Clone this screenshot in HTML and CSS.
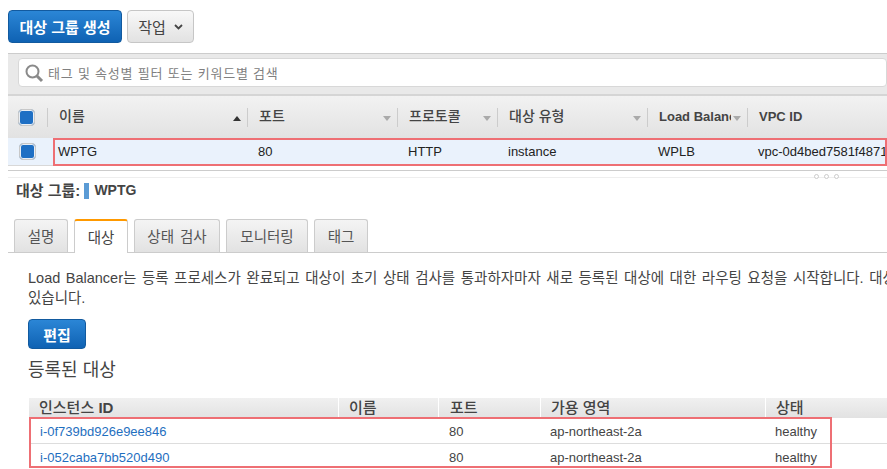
FILE: index.html
```html
<!DOCTYPE html>
<html lang="ko">
<head>
<meta charset="utf-8">
<title>대상 그룹</title>
<link rel="stylesheet" href="styles.css">
</head>
<body>
<div class="toolbar">
  <button class="btn primary create">대상 그룹 생성</button>
  <button class="btn action">작업 <svg class="chev" width="9" height="6" viewBox="0 0 9 6"><path d="M1 1l3.5 3.5L8 1" fill="none" stroke="#444" stroke-width="1.8"/></svg></button>
</div>
<section class="panel">
  <div class="searchbar">
    <div class="search">
      <svg width="20" height="20" viewBox="0 0 20 20"><circle cx="8.5" cy="8.5" r="6" fill="none" stroke="#8a8a8a" stroke-width="2"/><path d="M13 13l5 5" stroke="#8a8a8a" stroke-width="3"/></svg>
      <span>태그 및 속성별 필터 또는 키워드별 검색</span>
    </div>
  </div>
  <div class="grid head">
    <div class="c-check"><span class="check"></span></div>
    <div class="th">이름<i class="sort up"></i></div>
    <div class="th">포트<i class="sort"></i></div>
    <div class="th">프로토콜<i class="sort"></i></div>
    <div class="th">대상 유형<i class="sort"></i></div>
    <div class="th latin"><span class="clip">Load Balancer</span><i class="sort"></i></div>
    <div class="th latin">VPC ID</div>
  </div>
  <div class="grid row">
    <div class="c-check rowcheck"><span class="check"></span></div>
    <div class="td">WPTG</div>
    <div class="td">80</div>
    <div class="td">HTTP</div>
    <div class="td">instance</div>
    <div class="td">WPLB</div>
    <div class="td">vpc-0d4bed7581f4871</div>
    <div class="mark mark-top"></div>
  </div>
</section>
<div class="splitter"><span></span><span></span><span></span></div>
<section class="details">
  <h2 class="title">대상 그룹: <i class="swatch"></i> <b>WPTG</b></h2>
  <nav class="tabs">
    <a class="tab t1">설명</a>
    <a class="tab t2 active">대상</a>
    <a class="tab t3">상태 검사</a>
    <a class="tab t4">모니터링</a>
    <a class="tab t5">태그</a>
  </nav>
  <div class="content">
    <p class="desc">Load Balancer는 등록 프로세스가 완료되고 대상이 초기 상태 검사를 통과하자마자 새로 등록된 대상에 대한 라우팅 요청을 시작합니다. 대상이<br>있습니다.</p>
    <button class="btn primary edit">편집</button>
    <h3 class="sub">등록된 대상</h3>
    <div class="targets">
      <div class="tgrid thead">
        <div>인스턴스 <b>ID</b></div><div>이름</div><div>포트</div><div>가용 영역</div><div>상태</div>
      </div>
      <div class="tgrid tr">
        <a>i-0f739bd926e9ee846</a><div></div><div>80</div><div>ap-northeast-2a</div><div>healthy</div>
      </div>
      <div class="tgrid tr">
        <a>i-052caba7bb520d490</a><div></div><div>80</div><div>ap-northeast-2a</div><div>healthy</div>
      </div>
      <div class="mark mark-bottom"></div>
    </div>
  </div>
</section>
</body>
</html>
```
FILE: styles.css
```css
* { box-sizing: border-box; }
html, body { margin: 0; padding: 0; height: 469px; overflow: hidden; background: #fff; }
body { width: 887px; font-family: "Liberation Sans", "Noto Sans CJK KR", sans-serif; font-size: 13px; color: #444; }

.toolbar { display: flex; gap: 5px; padding: 10px 0 0 8px; height: 53px; }
.btn { height: 33px; border-radius: 4px; font-family: inherit; font-size: 15px; font-weight: bold; padding: 0; }
.primary { color: #fff; background: linear-gradient(#2b86d6, #0f62b3); border: 1px solid #125a9f; }
.create { width: 114px; }
.action { width: 67px; color: #444; font-weight: normal; background: linear-gradient(#f8f8f8, #e2e2e2); border: 1px solid #c6c6c6; display: flex; align-items: center; justify-content: center; gap: 8px; }

.panel { margin-left: 8px; border-top: 1px solid #ccc; }
.searchbar { height: 42px; padding: 4px 0 0 10px; background: #e9e9e9; border-bottom: 2px solid #d5d5d5; }
.search { height: 29px; display: flex; align-items: center; gap: 4px; padding-left: 5px; background: #fff; border: 1px solid #d8d8d8; border-radius: 4px; color: #808080; font-size: 13px; letter-spacing: 0.8px; }

.grid { position: relative; display: grid; grid-template-columns: 39px 200px 150px 100px 150px 100px 1fr; align-items: center; }
.head { height: 42px; background: linear-gradient(#f2f2f2, #e2e2e2); font-size: 14px; font-weight: 500; color: #444; }
.row { height: 28px; background: #eaf2fc; border-bottom: 1px solid #d8d8d8; font-size: 13px; color: #222; }
.c-check { padding-left: 10px; display: flex; }
.rowcheck { padding-left: 11px; }
.check { width: 17px; height: 17px; background: #1e6fc4; border: 1px solid #c8c8c8; border-radius: 4px; box-shadow: inset 0 0 0 1px #e8eef5; }
.th { position: relative; height: 19px; line-height: 17px; padding-left: 11px; border-left: 1px solid #ccc; }
.latin { font-size: 13px; font-weight: bold; }
.td { padding-left: 11px; white-space: nowrap; }
.clip { display: block; width: 72px; overflow: hidden; white-space: nowrap; }
.sort { position: absolute; right: 6px; top: 8px; width: 0; height: 0; border-left: 4px solid transparent; border-right: 4px solid transparent; border-top: 5px solid #aaa; }
.sort.up { border-top: 0; border-bottom: 5px solid #333; }
.mark { position: absolute; border: 2px solid #ee6f74; pointer-events: none; }
.mark-top { left: 45px; right: 0; top: 0; bottom: -1px; }

.splitter { height: 8px; margin: 4px 0 0 8px; border-top: 1px solid #ccc; border-bottom: 1px solid #eee; display: flex; justify-content: flex-end; align-items: flex-end; gap: 5px; padding-right: 48px; }
.splitter span { width: 5px; height: 5px; margin-bottom: -2px; background: #fff; border: 1px solid #ccc; border-radius: 50%; }

.title { margin: 0; padding: 5px 0 0 16px; height: 41px; font-size: 15px; font-weight: bold; color: #444; display: flex; align-items: flex-start; gap: 4px; line-height: 15px; }
.title b { margin-left: 1px; font-size: 14px; }
.swatch { width: 5px; height: 16px; background: #5b9bd5; }

.tabs { display: flex; gap: 6px; height: 34px; margin-left: 8px; padding-left: 6px; border-bottom: 1px solid #ccc; }
.tab { height: 33px; padding-bottom: 2px; display: flex; align-items: center; justify-content: center; font-size: 14.5px; word-spacing: 2px; color: #555; background: linear-gradient(#f4f4f4, #e2e2e2); border: 1px solid #ccc; border-bottom: 0; border-radius: 3px 3px 0 0; }
.t1 { width: 54px; } .t2 { width: 54px; } .t3 { width: 86px; } .t4 { width: 82px; } .t5 { width: 54px; }
.tab.active { background: #fff; border-top: 2px solid #f90; height: 34px; color: #444; }

.content { padding-left: 28px; width: 887px; }
.desc { margin: 15px 0 0; width: 859px; height: 40px; overflow: hidden; line-height: 20px; font-size: 14.5px; word-spacing: 1.5px; color: #444; white-space: nowrap; }
.edit { display: block; width: 58px; height: 30px; margin-top: 11px; }
.sub { margin: 11px 0 0; font-size: 18px; font-weight: normal; color: #444; line-height: 20px; }

.targets { position: relative; margin: 18px 0 0 1px; }
.tgrid { display: grid; grid-template-columns: 309px 100px 102px 225px 1fr; }
.tgrid > * { padding-left: 10px; }
.tgrid > :nth-child(3) { padding-left: 11px; }
.thead { height: 20px; line-height: 20px; background: linear-gradient(#f0f0f0, #e2e2e2); font-size: 15px; font-weight: 500; }
.thead > div + div { border-left: 1px solid #fff; }
.tr { height: 26px; line-height: 27px; border-bottom: 1px solid #ddd; font-size: 13px; }
.tr a { color: #1f6fc0; padding-left: 11px; }
.mark-bottom { left: 0; width: 803px; top: 19px; height: 51px; }
```
